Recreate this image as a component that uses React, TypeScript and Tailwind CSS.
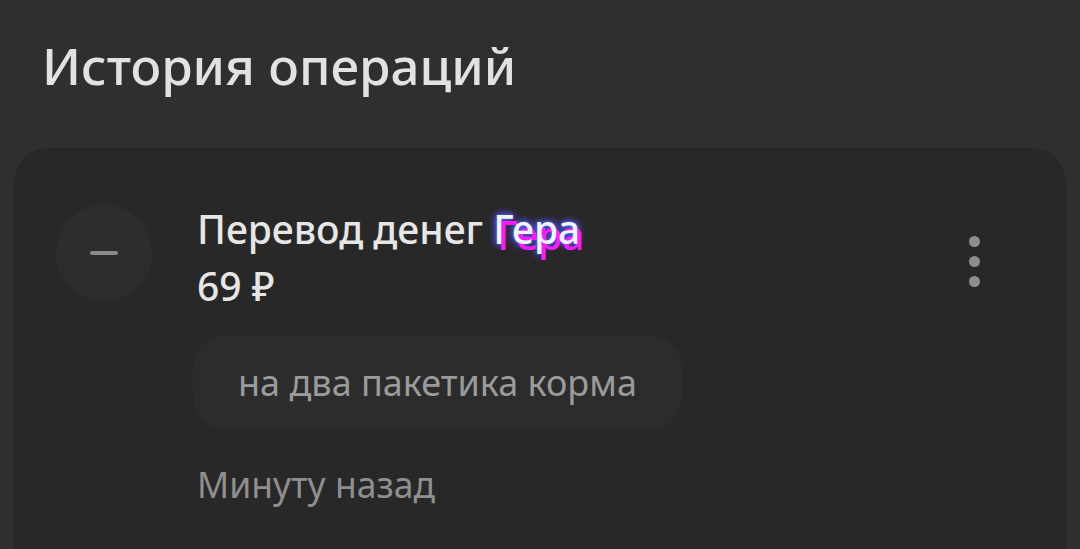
export default function App() {
  return (
    <div
      className="w-[1080px] h-[549px] overflow-hidden bg-[#2f2f2f] flex flex-col"
      style={{ fontFamily: '"Noto Sans", "Open Sans", sans-serif' }}
    >
      <h1 className="pl-[42px] pt-[33px] h-[148px] text-[51px] leading-[64px] text-[#e2e2e2] font-medium">
        История операций
      </h1>

      <div className="mx-[14px] flex-1 rounded-t-[34px] bg-[#282828] flex items-start pl-[42px] pr-[86px] pt-[52px]">
        <div className="mt-[5px] w-[96px] h-[96px] rounded-full bg-[#2d2d2d] flex items-center justify-center shrink-0">
          <div className="w-[28px] h-[4px] rounded-full bg-[#8a8a8a]" />
        </div>

        <div className="ml-[45px] flex-1 flex flex-col">
          <div className="text-[39px] leading-[57px] font-medium text-[#e6e6e6]">
            Перевод денег{" "}
            <span className="text-[#f4f6ff] [text-shadow:4px_6px_0_#ff1aff,0_0_3px_#3f6bff,0_0_6px_#4f5cff,0_0_10px_#6a4cff]">
              Гера
            </span>
          </div>
          <div className="text-[39px] leading-[57px] font-medium text-[#e6e6e6]">69 ₽</div>

          <div className="mt-[21px] -ml-[4px] self-start h-[95px] px-[45px] rounded-[34px] bg-[#2c2c2c] flex items-center">
            <span className="text-[36px] text-[#9b9b9b]">на два пакетика корма</span>
          </div>

          <div className="mt-[30px] text-[35.5px] leading-[48px] text-[#8f8f8f]">Минуту назад</div>
        </div>

        <div className="flex flex-col gap-[9px] pt-[36px]">
          <div className="w-[11px] h-[11px] rounded-full bg-[#8d8d8d]" />
          <div className="w-[11px] h-[11px] rounded-full bg-[#8d8d8d]" />
          <div className="w-[11px] h-[11px] rounded-full bg-[#8d8d8d]" />
        </div>
      </div>
    </div>
  );
}
